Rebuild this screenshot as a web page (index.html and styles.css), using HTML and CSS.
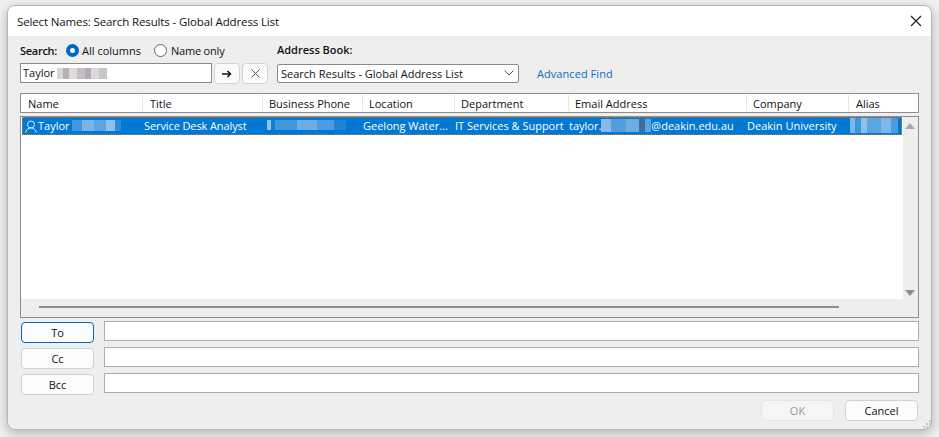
FILE: index.html
```html
<!DOCTYPE html>
<html lang="en">
<head>
<meta charset="utf-8">
<title>Select Names</title>
<link rel="stylesheet" href="styles.css">
</head>
<body>
<div class="window">
  <div class="titlebar">
    <span class="title">Select Names: Search Results - Global Address List</span>
    <svg class="close" width="12" height="12" viewBox="0 0 12 12"><path d="M1 1l10 10M11 1L1 11" stroke="#1a1a1a" stroke-width="1.1" fill="none"/></svg>
  </div>
  <div class="client">
    <div class="search-area">
      <div class="search-col">
        <div class="radio-row">
          <b class="label search-label">Search:</b>
          <span class="radio on"></span><span class="radio-text first">All columns</span>
          <span class="radio"></span><span class="radio-text second">Name only</span>
        </div>
        <div class="search-row">
          <div class="searchbox">Taylor <span class="blur blur-gray"></span></div>
          <div class="mini">
            <svg width="10" height="8" viewBox="0 0 10 8"><path d="M0 4h8M5.500 1l3 3-3 3" stroke="#111" stroke-width="1.500" fill="none"/></svg>
          </div>
          <div class="mini">
            <svg width="9" height="9" viewBox="0 0 9 9"><path d="M.5.5l8 8M8.500.5l-8 8" stroke="#555" stroke-width="1" fill="none"/></svg>
          </div>
        </div>
      </div>
      <div class="book-col">
        <b class="label book-label">Address Book:</b>
        <div class="book-row">
          <div class="select">
            <span>Search Results - Global Address List</span>
            <svg width="10" height="6" viewBox="0 0 10 6"><path d="M.5.5L5 5 9.500.5" stroke="#555" fill="none"/></svg>
          </div>
          <span class="link">Advanced Find</span>
        </div>
      </div>
    </div>

    <div class="header">
      <span class="hc c1">Name</span><span class="hc c2">Title</span><span class="hc c3">Business Phone</span><span class="hc c4">Location</span><span class="hc c5">Department</span><span class="hc c6">Email Address</span><span class="hc c7">Company</span><span class="hc c8">Alias</span>
    </div>

    <div class="list">
      <div class="list-main">
        <div class="rows">
          <div class="row">
            <span class="cell d1">
              <svg class="person" width="12" height="13" viewBox="0 0 12 13"><circle cx="6" cy="4.500" r="3.500" fill="none" stroke="#d7ecfb"/><path d="M.7 12.500c.5-3 2.500-4.500 5.300-4.500s4.800 1.500 5.300 4.500" fill="none" stroke="#d7ecfb"/></svg>Taylor <span class="blur blur-name"></span>
            </span>
            <span class="cell d2">Service Desk Analyst</span>
            <span class="cell d3"><span class="blur blur-phone"></span></span>
            <span class="cell d4">Geelong Water...</span>
            <span class="cell d5">IT Services &amp; Support</span>
            <span class="cell d6">taylor.<span class="blur blur-mail"></span>@deakin.edu.au</span>
            <span class="cell d7">Deakin University</span>
            <span class="cell d8"><span class="blur blur-alias"></span></span>
          </div>
        </div>
        <div class="vscroll">
          <span class="arrow-up"></span>
          <span class="arrow-down"></span>
        </div>
      </div>
      <div class="hscroll"><span class="thumb"></span></div>
    </div>

    <div class="recipients">
      <div class="rec-row"><div class="btn default">To</div><div class="rec-input"></div></div>
      <div class="rec-row"><div class="btn">Cc</div><div class="rec-input"></div></div>
      <div class="rec-row"><div class="btn">Bcc</div><div class="rec-input"></div></div>
    </div>

    <div class="actions">
      <div class="btn disabled">OK</div>
      <div class="btn">Cancel</div>
    </div>
    <svg class="grip" width="9" height="9" viewBox="0 0 9 9"><path d="M7 0h2v2H7zM4 3h2v2H4zM7 3h2v2H7zM1 6h2v2H1zM4 6h2v2H4zM7 6h2v2H7z" fill="#c4c4c4"/></svg>
  </div>
</div>
</body>
</html>
```
FILE: styles.css
```css
* { box-sizing: border-box; }
html, body { margin: 0; height: 100%; }
body {
  background: #f1f1f1;
  font-family: "Open Sans", "Noto Sans", "Liberation Sans", sans-serif;
  font-size: 11px;
  color: #111;
  overflow: hidden;
  padding: 5px 0 0 7px;
}
.window {
  position: relative;
  width: 925px;
  height: 425px;
  border: 1px solid #b5b5b5;
  border-radius: 8px;
  background: #eee;
  box-shadow: 0 3px 12px rgba(0,0,0,.28);
  overflow: hidden;
  display: flex;
  flex-direction: column;
}
.titlebar {
  height: 30px;
  background: #fff;
  display: flex;
  align-items: center;
  justify-content: space-between;
  padding: 0 9px 0 9px;
  flex: none;
}
.title { font-size: 11.5px; letter-spacing: -.13px; color: #111; }
.client { flex: 1; padding: 0 11px 0 12px; position: relative; display: flex; flex-direction: column; }

.search-area { display: flex; gap: 9px; padding-top: 6px; height: 57px; }
.search-col { width: 248px; }
.radio-row { display: flex; align-items: center; height: 16px; margin-top: 0; }
.label { font-weight: 600; font-size: 11px; color: #111; }
.search-label { letter-spacing: -.28px; }
.radio {
  width: 13px; height: 13px; border-radius: 50%;
  border: 1px solid #666; background: #fff; flex: none;
}
.radio.on { border: 4px solid #0067c0; background: #fff; margin-left: 9px; }
.radio-text { margin-left: 3px; }
.radio-text.first { margin-right: 13px; }
.radio-text.second { margin-left: 4px; letter-spacing: -.2px; }
.search-row { display: flex; gap: 2px; margin-top: 5px; }
.searchbox {
  width: 192px; height: 20px; border: 1px solid #8a8a8a; background: #fff;
  font-size: 11px; line-height: 17px; padding-left: 2px; white-space: nowrap;
}
.mini {
  width: 26px; height: 21px; border: 1px solid #d2d2d2; border-radius: 4px;
  background: #fbfbfb; display: flex; align-items: center; justify-content: center;
}
.book-col { display: flex; flex-direction: column; }
.book-label { display: block; height: 16px; line-height: 16px; }
.book-row { display: flex; align-items: center; gap: 18px; margin-top: 5px; height: 20px; }
.select {
  width: 242px; height: 19px; border: 1px solid #8a8a8a; border-radius: 2px; background: #fff;
  display: flex; align-items: center; justify-content: space-between;
  padding: 0 4px 0 3px; white-space: nowrap;
}
.link { color: #0f6cbd; font-size: 11px; letter-spacing: .06px; }

.header {
  height: 20px; flex: none; width: 899px; background: #fff; border: 1px solid #8d8d8d;
  display: flex; align-items: center;
}
.hc { flex: none; padding-left: 6px; height: 16px; line-height: 17px; border-right: 1px solid #e4e4e4; white-space: nowrap; }
.c1 { width: 122px; padding-left: 7px; } .c2 { width: 120px; padding-left: 7px; } .c3 { width: 100px; } .c4 { width: 92px; }
.c5 { width: 114px; } .c6 { width: 178px; } .c7 { width: 102px; } .c8 { border-right: 0; padding-left: 7px; }

.list {
  margin: 3px 0 0 0; width: 899px; height: 202px; flex: none;
  border: 1px solid #8d8d8d; background: #eee; display: flex; flex-direction: column;
}
.list-main { flex: 1; display: flex; min-height: 0; }
.rows { width: 882px; background: #fff; padding-left: 1px; }
.row {
  height: 18px; padding-bottom: 2px; background: #0078d4; color: #fff; display: flex; align-items: center;
  white-space: nowrap; width: 880px;
  outline: 1px dotted #c87a1e; outline-offset: -1px; overflow: hidden;
}
.cell { flex: none; display: flex; align-items: center; white-space: pre; }
.d1 { width: 122px; padding-left: 3px; }
.d2 { width: 120px; letter-spacing: -.1px; } .d3 { width: 99px; } .d4 { width: 92px; }
.d5 { width: 114px; } .d6 { width: 178px; } .d7 { width: 103px; } .d8 { flex: 1; }
.person { margin-right: 1px; margin-top: 2px; }
.blur { display: inline-block; height: 11px; flex: none; }
.blur-gray { width: 50px; height: 11px; vertical-align: -2px;
  background: linear-gradient(90deg,#d8d4d8 0 12%,#b8b0b8 12% 24%,#dcdcdc 24% 40%,#c8bcc4 40% 56%,#b4acb4 56% 68%,#dcd8dc 68% 84%,#c8c8c8 84% 100%); }
.blur-name { width: 49px; background: linear-gradient(90deg,#3f97dd 0 20%,#78b4e6 20% 45%,#5aa5e0 45% 70%,#8fc0ea 70% 88%,#2f8cda 88% 100%); }
.blur-phone { width: 82px; height: 10px; background: linear-gradient(90deg,#0078d4 0 4%,#8fc0ea 4% 8%,#0f80d8 8% 14%,#3f97dd 14% 40%,#6dade4 40% 65%,#4a9de0 65% 85%,#1f84d8 85% 100%); }
.blur-mail { width: 50px; height: 13px; background: linear-gradient(90deg,#8ab9e4 0 20%,#4f9fde 20% 50%,#6dade4 50% 75%,#3a6f9e 75% 88%,#5aa5e0 88% 100%); }
.blur-alias { width: 48px; height: 15px; background: linear-gradient(90deg,#7fb7e8 0 10%,#3f97dd 10% 22%,#8fc0ea 22% 36%,#5aa5e0 36% 64%,#7fb7e8 64% 85%,#4a9de0 85% 100%); }

.vscroll { flex: 1; position: relative; background: #eee; }
.arrow-up, .arrow-down { position: absolute; left: 2px; width: 0; height: 0; border-left: 5px solid transparent; border-right: 5px solid transparent; }
.arrow-up { top: 6px; border-bottom: 6px solid #a8a8a8; }
.arrow-down { bottom: 3px; border-top: 6px solid #8e8e8e; }
.hscroll { height: 18px; flex: none; padding: 7px 0 0 18px; }
.thumb { display: block; width: 800px; height: 2px; background: #8b8b8b; }

.recipients { display: flex; flex-direction: column; gap: 6px; margin-top: 3px; }
.rec-row { display: flex; height: 20px; gap: 10px; }
.btn {
  width: 73px; height: 21px; border: 1px solid #d2d2d2; border-radius: 4px; background: #fcfcfc;
  display: flex; align-items: center; justify-content: center; flex: none; font-size: 11px; color: #111;
}
.rec-row .btn { margin: 1px 0 0 1px; }
.btn.default { border-color: #0067c0; }
.rec-input { width: 815px; height: 20px; border: 1px solid #adadad; background: #fff; }
.actions { display: flex; justify-content: flex-end; gap: 11px; margin-top: 7px; padding-right: 2px; }
.btn.disabled { background: #f5f5f5; border-color: #e5e5e5; color: #999; }
.grip { position: absolute; right: 0; bottom: 0; }
```
